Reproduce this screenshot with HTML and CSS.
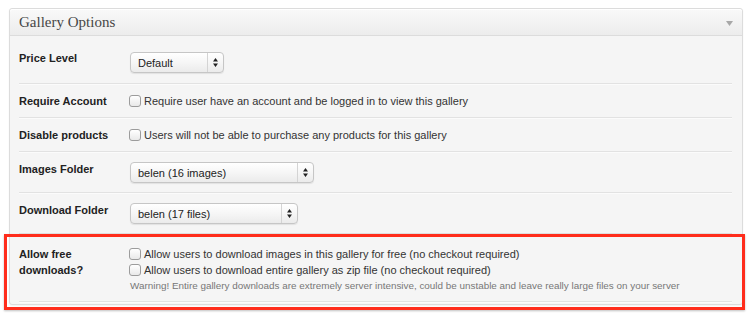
FILE: index.html
```html
<!DOCTYPE html>
<html>
<head>
<meta charset="utf-8">
<link rel="stylesheet" href="styles.css">
</head>
<body>
<div class="panel">
  <div class="panel-head">
    <h3 class="panel-title">Gallery Options</h3>
    <svg class="toggle" width="7" height="5" viewBox="0 0 7 5"><path d="M0 0H7L3.5 5Z" fill="#a8a8a8"/></svg>
  </div>
  <div class="panel-body">
    <div class="row row-first">
      <div class="label">Price Level</div>
      <div class="field">
        <div class="select sel-price"><span class="sel-text">Default</span><span class="sel-arrows"><svg width="5" height="9" viewBox="0 0 5 9"><path d="M2.5 0L5 3.5H0Z M2.5 9L5 5.5H0Z" fill="#222"/></svg></span></div>
      </div>
    </div>
    <div class="row">
      <div class="label">Require Account</div>
      <div class="field"><label class="check"><span class="box"></span>Require user have an account and be logged in to view this gallery</label></div>
    </div>
    <div class="row">
      <div class="label">Disable products</div>
      <div class="field"><label class="check"><span class="box"></span>Users will not be able to purchase any products for this gallery</label></div>
    </div>
    <div class="row">
      <div class="label">Images Folder</div>
      <div class="field">
        <div class="select sel-images"><span class="sel-text">belen (16 images)</span><span class="sel-arrows"><svg width="5" height="9" viewBox="0 0 5 9"><path d="M2.5 0L5 3.5H0Z M2.5 9L5 5.5H0Z" fill="#222"/></svg></span></div>
      </div>
    </div>
    <div class="row">
      <div class="label">Download Folder</div>
      <div class="field">
        <div class="select sel-download"><span class="sel-text">belen (17 files)</span><span class="sel-arrows"><svg width="5" height="9" viewBox="0 0 5 9"><path d="M2.5 0L5 3.5H0Z M2.5 9L5 5.5H0Z" fill="#222"/></svg></span></div>
      </div>
    </div>
    <div class="row row-free">
      <div class="label label-wrap">Allow free<br>downloads?</div>
      <div class="field">
        <label class="check check-tall"><span class="box"></span>Allow users to download images in this gallery for free (no checkout required)</label>
        <label class="check check-tall"><span class="box"></span>Allow users to download entire gallery as zip file (no checkout required)</label>
        <div class="warning">Warning! Entire gallery downloads are extremely server intensive, could be unstable and leave really large files on your server</div>
      </div>
    </div>
  </div>
</div>
<div class="highlight"></div>
</body>
</html>
```

FILE: styles.css
```css
html, body {
  margin: 0;
  padding: 0;
  background: #fff;
  width: 750px;
  height: 320px;
  overflow: hidden;
  font-family: "Liberation Sans", Arial, sans-serif;
  color: #333;
}

body {
  position: relative;
  padding-top: 8px;
  box-sizing: border-box;
}

.panel {
  margin-left: 9px;
  width: 734px;
  box-sizing: border-box;
  border: 1px solid #dcdcdc;
  border-radius: 3px;
  background: #f5f5f5;
  box-shadow: 0 1px 2px rgba(0,0,0,0.06);
}

.panel-head {
  height: 26px;
  border-bottom: 1px solid #dcdcdc;
  background: linear-gradient(#f9f9f9, #ececec);
  border-radius: 3px 3px 0 0;
  display: flex;
  align-items: center;
  justify-content: space-between;
  padding: 0 9px 0 9px;
  box-shadow: inset 0 1px 0 #fff;
}

.panel-title {
  margin: 0;
  font-family: "Liberation Serif", "Times New Roman", serif;
  font-weight: normal;
  font-size: 15px;
  color: #464646;
  line-height: 26px;
}

.toggle {
  margin-top: 2px;
}

.panel-body {
  padding: 0 10px 2px 9px;
}

.row {
  display: flex;
  align-items: flex-start;
  padding: 10px 0 9px;
  border-bottom: 1px solid #e2e2e2;
  box-shadow: 0 1px 0 #fbfbfb;
}

.row-first {
  padding-top: 15px;
  padding-bottom: 10px;
}

.row-free {
  padding-top: 12px;
  padding-bottom: 7px;
}

.label {
  width: 111px;
  flex: none;
  font-weight: bold;
  font-size: 11px;
  line-height: 14px;
  color: #222;
}

.label-wrap {
  line-height: 16px;
}

.field {
  flex: 1;
  font-size: 11px;
  line-height: 14px;
  color: #333;
}

.check {
  display: flex;
  align-items: center;
  height: 14px;
  margin-left: -1px;
}

.check-tall {
  height: 16px;
}

.box {
  width: 10px;
  height: 10px;
  border: 1px solid #9c9c9c;
  border-radius: 3px;
  background: linear-gradient(#ffffff, #e9e9e9);
  margin-right: 3px;
  flex: none;
}

.warning {
  font-size: 9.9px;
  line-height: 16px;
  color: #777;
}

.select {
  display: flex;
  align-items: center;
  height: 21px;
  box-sizing: border-box;
  border: 1px solid #c6c6c6;
  border-radius: 4px;
  background: linear-gradient(#ffffff, #f6f6f6 50%, #ebebeb);
  box-shadow: 0 1px 1px rgba(0,0,0,0.08);
  color: #222;
  font-size: 11px;
}

.row-first .select {
  margin-top: 1px;
}

.sel-price { width: 94px; }
.sel-images { width: 184px; }
.sel-download { width: 168px; }

.sel-text {
  flex: 1;
  padding-left: 7px;
}

.sel-arrows {
  width: 15px;
  height: 19px;
  border-left: 1px solid #d4d4d4;
  display: flex;
  align-items: center;
  justify-content: center;
}

.highlight {
  position: absolute;
  left: 4px;
  top: 234px;
  width: 741px;
  height: 76px;
  box-sizing: border-box;
  border: 3px solid #ff2d1c;
  box-shadow: 0 1px 2px rgba(0,0,0,0.25);
  pointer-events: none;
}
```
